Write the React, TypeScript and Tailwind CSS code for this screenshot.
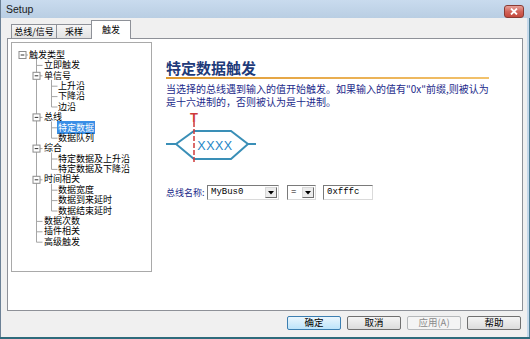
import React from 'react';

type Row = { level: 0 | 1 | 2; label: string; box?: boolean; selected?: boolean };

const rows: Row[] = [
  { level: 0, label: '触发类型', box: true },
  { level: 1, label: '立即触发' },
  { level: 1, label: '单信号', box: true },
  { level: 2, label: '上升沿' },
  { level: 2, label: '下降沿' },
  { level: 2, label: '边沿' },
  { level: 1, label: '总线', box: true },
  { level: 2, label: '特定数据', selected: true },
  { level: 2, label: '数据队列' },
  { level: 1, label: '综合', box: true },
  { level: 2, label: '特定数据及上升沿' },
  { level: 2, label: '特定数据及下降沿' },
  { level: 1, label: '时间相关', box: true },
  { level: 2, label: '数据宽度' },
  { level: 2, label: '数据到来延时' },
  { level: 2, label: '数据结束延时' },
  { level: 1, label: '数据次数' },
  { level: 1, label: '插件相关' },
  { level: 1, label: '高级触发' },
];

const ROW_H = 10.4;
const TOP = 12;
const cy = (i: number) => TOP + i * ROW_H;

const indent = ['pl-[17px]', 'pl-[32px]', 'pl-[46px]'];

function TreeLines() {
  const boxX = [10.5, 24.5, 39.5];
  const L1X = 24.5;
  const L2X = 39.5;
  const l1Rows = rows.map((r, i) => (r.level === 1 ? i : -1)).filter((i) => i >= 0);
  const lastL1 = l1Rows[l1Rows.length - 1];

  const groups: { parent: number; last: number }[] = [];
  let parent = 0;
  rows.forEach((r, i) => {
    if (r.level === 1) parent = i;
    if (r.level === 2) {
      const g = groups[groups.length - 1];
      if (g && g.parent === parent) g.last = i;
      else groups.push({ parent, last: i });
    }
  });

  const stroke = '#a6a6a6';
  return (
    <svg className="pointer-events-none absolute left-0 top-0" width="139" height="228">
      <line x1={L1X} y1={cy(0) + 2} x2={L1X} y2={cy(lastL1)} stroke={stroke} />
      {groups.map((g) => (
        <line key={g.parent} x1={L2X} y1={cy(g.parent) + 4} x2={L2X} y2={cy(g.last)} stroke={stroke} />
      ))}
      {rows.map((r, i) => {
        const y = cy(i);
        if (r.level === 0) return <line key={i} x1={14} y1={y} x2={16} y2={y} stroke={stroke} />;
        if (r.level === 1) return <line key={i} x1={L1X} y1={y} x2={30.5} y2={y} stroke={stroke} />;
        return <line key={i} x1={L2X} y1={y} x2={45.5} y2={y} stroke={stroke} />;
      })}
      {rows.map((r, i) =>
        r.box ? (
          <g key={'b' + i}>
            <rect x={boxX[r.level] - 3.5} y={cy(i) - 3.5} width={7} height={7} fill="#fff" stroke="#8c8c8c" />
            <line x1={boxX[r.level] - 1.8} y1={cy(i)} x2={boxX[r.level] + 1.8} y2={cy(i)} stroke="#333" />
          </g>
        ) : null
      )}
    </svg>
  );
}

function Tree() {
  return (
    <div className="mt-[3px] ml-[3px] h-[230px] w-[141px] shrink-0 border border-[#a9a9a9] bg-white">
      <div className="relative h-full pt-[6.8px]">
        <TreeLines />
        {rows.map((r, i) => (
          <div key={i} className={`relative h-[10.4px] text-[9px] leading-[10.4px] text-black ${indent[r.level]}`}>
            {r.selected ? (
              <span className="-ml-[1px] bg-[#3a8ee6] px-[1px] text-white">{r.label}</span>
            ) : (
              r.label
            )}
          </div>
        ))}
      </div>
    </div>
  );
}

function Arrow() {
  return (
    <div className="flex h-[11px] w-[12px] items-center justify-center border border-[#d8d8d8] border-r-[#6e6e6e] border-b-[#6e6e6e] bg-[#ececec]">
      <svg width="6" height="4" viewBox="0 0 6 4">
        <path d="M0 0h6L3 3.5z" fill="#000" />
      </svg>
    </div>
  );
}

function Diagram() {
  return (
    <svg width="95" height="56" className="mt-[3px] block">
      <polyline points="0,33 10,33 28,20 65,20 82,33 90,33" fill="none" stroke="#3a8fb7" strokeWidth="2" />
      <polyline points="10,33 28,48 65,48 82,33" fill="none" stroke="#3a8fb7" strokeWidth="2" />
      <line x1="28" y1="11" x2="28" y2="53" stroke="#cf3a3a" strokeWidth="1.5" strokeDasharray="5 2" />
      <text x="28" y="11" textAnchor="middle" fontSize="13" fontWeight="bold" fill="#cf3a3a" fontFamily="Liberation Sans, sans-serif">
        T
      </text>
      <text x="49" y="38.5" textAnchor="middle" fontSize="12.5" fill="#2485c6" fontFamily="Liberation Sans, sans-serif" letterSpacing="0.5">
        XXXX
      </text>
    </svg>
  );
}

function Btn({ label, kind }: { label: string; kind?: 'default' | 'disabled' }) {
  const base = 'flex h-[14px] w-[54px] items-center justify-center rounded-[2px] border text-[9.5px] leading-none';
  const style =
    kind === 'default'
      ? 'border-[#3c7fb1] bg-gradient-to-b from-[#eaf6fd] to-[#bde4fa] text-black'
      : kind === 'disabled'
        ? 'border-[#b5b8ba] bg-[#f4f4f4] text-[#8a8a8a]'
        : 'border-[#707070] bg-gradient-to-b from-[#f4f4f4] to-[#dcdcdc] text-black';
  return <div className={`${base} ${style}`}>{label}</div>;
}

export default function App() {
  return (
    <div className="flex h-[339px] w-[530px] flex-col overflow-hidden bg-[#f0f0f0] font-['Noto_Sans_CJK_SC','Noto_Sans',sans-serif]">
      <div className="flex h-[18px] shrink-0 items-start justify-between border-l border-[#6c8196] bg-gradient-to-b from-[#c9dbee] to-[#b9cee3]">
        <span className="mt-[3px] ml-[5px] font-['Liberation_Sans',sans-serif] text-[10.5px] leading-[12px] text-[#1b1b1b]">Setup</span>
        <div className="mt-[5px] mr-[6px] flex h-[13px] w-[20px] items-center justify-center rounded-[3px] border border-[#8a3b33] bg-gradient-to-b from-[#e6a199] via-[#d2645a] to-[#c4483c]">
          <svg width="8" height="7" viewBox="0 0 8 7">
            <path d="M1 0.5l6 6M7 0.5l-6 6" stroke="#fff" strokeWidth="1.8" />
          </svg>
        </div>
      </div>

      <div className="flex min-h-0 flex-1">
        <div className="flex flex-1 flex-col border-l border-[#6c8196] pl-[6px] pr-[4px]">
          <div className="flex h-[20px] shrink-0 items-end pl-[4px] text-[9px] leading-none text-black">
            <div className="flex h-[14px] w-[46px] items-center justify-center border border-b-0 border-[#8e9198] bg-gradient-to-b from-[#f6f6f6] to-[#e2e2e2]">
              总线/信号
            </div>
            <div className="-ml-px flex h-[14px] w-[36px] items-center justify-center border border-b-0 border-[#8e9198] bg-gradient-to-b from-[#f6f6f6] to-[#e2e2e2]">
              采样
            </div>
            <div className="relative z-10 -mb-px -ml-px flex h-[19px] w-[40px] items-center justify-center border border-b-0 border-[#8e9198] bg-white pb-[2px]">
              触发
            </div>
          </div>

          <div className="flex h-[273px] shrink-0 border border-[#8e9198] bg-white">
            <Tree />
            <div className="ml-[14px] flex flex-col pt-[20px]">
              <div className="text-[15px] font-bold leading-[17px] text-[#1f3b7a]">特定数据触发</div>
              <div className="mt-[1px] h-[2px] w-[323px] bg-gradient-to-r from-[#df982c] to-[#f2c26c]" />
              <div className="mt-[3px] whitespace-nowrap text-[10px] leading-[13px] text-[#1c2a8a]">
                <div>当选择的总线遇到输入的值开始触发。如果输入的值有"0x"前缀,则被认为</div>
                <div>是十六进制的，否则被认为是十进制。</div>
              </div>
              <Diagram />
              <div className="mt-[18px] flex items-center text-[9px] text-[#1c2a8a]">
                <span className="w-[41px] whitespace-nowrap">总线名称:</span>
                <div className="flex h-[15px] w-[72px] items-center border border-[#7a7a7a] border-r-[#dadada] border-b-[#dadada] bg-white pr-[1px]">
                  <span className="ml-[3px] font-['Liberation_Mono',monospace] text-[9px] text-black">MyBus0</span>
                  <div className="ml-auto">
                    <Arrow />
                  </div>
                </div>
                <div className="ml-[8px] flex h-[15px] w-[29px] items-center border border-[#7a7a7a] border-r-[#dadada] border-b-[#dadada] bg-white pr-[1px]">
                  <span className="ml-[3px] font-['Liberation_Mono',monospace] text-[9px] text-black">=</span>
                  <div className="ml-auto">
                    <Arrow />
                  </div>
                </div>
                <div className="ml-[7px] flex h-[15px] w-[50px] items-center border border-[#7a7a7a] border-r-[#dadada] border-b-[#dadada] bg-white">
                  <span className="ml-[3px] font-['Liberation_Mono',monospace] text-[9px] text-black">0xfffc</span>
                </div>
              </div>
            </div>
          </div>

          <div className="mt-[5px] flex justify-end gap-[6px] pr-[2px]">
            <Btn label="确定" kind="default" />
            <Btn label="取消" />
            <Btn label="应用(A)" kind="disabled" />
            <Btn label="帮助" />
          </div>
        </div>
        <div className="w-[3px] shrink-0 border-r border-[#4f7f96] bg-[#c4d8ea]" />
      </div>
      <div className="h-[2px] shrink-0 bg-[#2f6b7c]" />
    </div>
  );
}
